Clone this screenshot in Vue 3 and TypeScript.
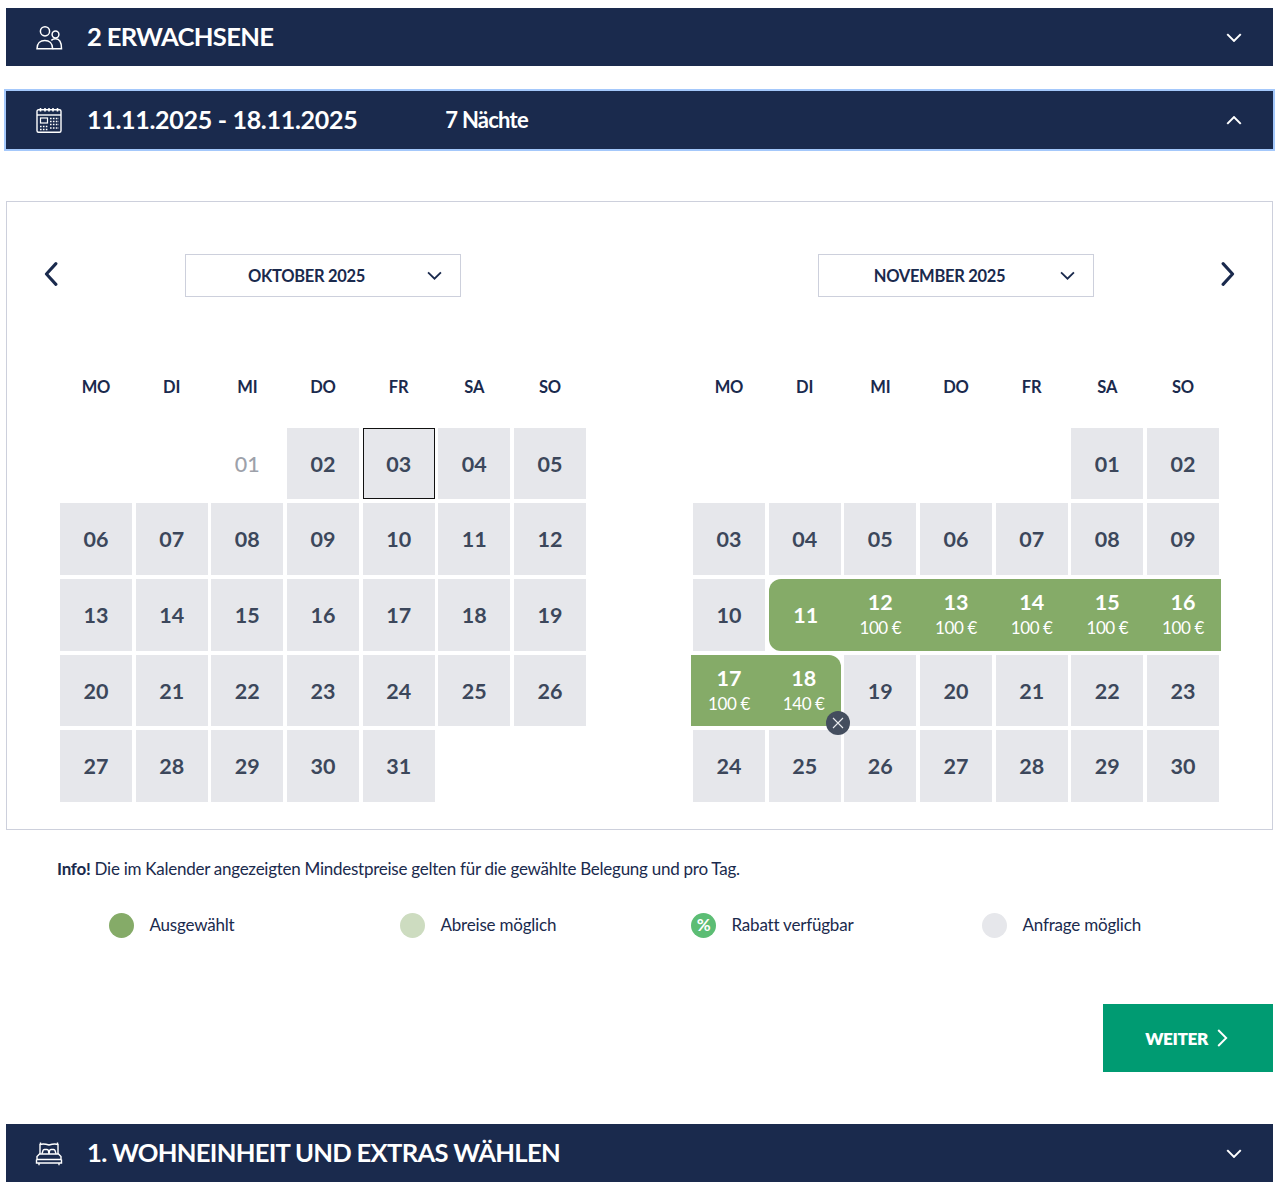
<script setup lang="ts">
interface Day {
  n: string
  price?: string
  muted?: boolean
  today?: boolean
  sel?: 'start' | 'mid' | 'end' | 'wrap'
  clear?: boolean
}
interface Month {
  label: string
  offset: number
  days: Day[]
}

const weekdays = ['MO', 'DI', 'MI', 'DO', 'FR', 'SA', 'SO']

const pad = (n: number) => String(n).padStart(2, '0')

const october: Day[] = Array.from({ length: 31 }, (_, i) => ({
  n: pad(i + 1),
  muted: i === 0,
  today: i === 2,
}))

const prices: Record<number, string> = {
  12: '100 €', 13: '100 €', 14: '100 €', 15: '100 €', 16: '100 €', 17: '100 €', 18: '140 €',
}

const november: Day[] = Array.from({ length: 30 }, (_, i) => {
  const n = i + 1
  const day: Day = { n: pad(n), price: prices[n] }
  if (n === 11) day.sel = 'start'
  else if (n >= 12 && n <= 15) day.sel = 'mid'
  else if (n === 16 || n === 17) day.sel = 'wrap'
  else if (n === 18) { day.sel = 'end'; day.clear = true }
  return day
})

const months: Month[] = [
  { label: 'OKTOBER 2025', offset: 2, days: october },
  { label: 'NOVEMBER 2025', offset: 5, days: november },
]

const legend = [
  { label: 'Ausgewählt', cls: 'dot--sel' },
  { label: 'Abreise möglich', cls: 'dot--dep' },
  { label: 'Rabatt verfügbar', cls: 'dot--disc' },
  { label: 'Anfrage möglich', cls: 'dot--req' },
]
</script>

<template>
  <div class="page">
    <div class="bar">
      <svg class="bar__icon" viewBox="0 0 28 25" fill="none" stroke="currentColor" stroke-width="1.500">
        <circle cx="10" cy="6.300" r="4.600" />
        <circle cx="20.500" cy="9.500" r="3.400" />
        <path d="M2 23.700c0-5.200 3.400-8.200 7.800-8.200s7.800 3 7.800 8.200z" />
        <path d="M16.300 15.300c1.200-1 2.700-1.500 4.200-1.500 3.800 0 6 3.500 6 9.900h-8.900" />
      </svg>
      <span class="bar__title">2 ERWACHSENE</span>
      <svg class="bar__chevron" viewBox="0 0 14 8" fill="none" stroke="currentColor" stroke-width="1.800"><path d="M1 1l6 6 6-6" /></svg>
    </div>

    <div class="bar bar--active">
      <svg class="bar__icon" viewBox="0 0 28 26" fill="none" stroke="currentColor" stroke-width="1.400">
        <rect x="2" y="2.800" width="24" height="22.400" rx="1.500" />
        <path d="M2 8h24" />
        <path d="M5.500 1v3.500M10 1v3.500M14 1v3.500M18 1v3.500M22.500 1v3.500" stroke-width="1.600" />
        <rect x="5.500" y="11" width="7" height="5" stroke-width="1.200" />
        <path d="M15 11.500h9M15 14.500h9M15 17.500h9M15 21h9M5 19.500h8M5 22.500h8" stroke-width="1.700" stroke-dasharray="1.600 1.300" />
      </svg>
      <span class="bar__title bar__title--date">11.11.2025 - 18.11.2025</span>
      <span class="bar__nights">7 Nächte</span>
      <svg class="bar__chevron" viewBox="0 0 14 8" fill="none" stroke="currentColor" stroke-width="1.800"><path d="M1 7l6-6 6 6" /></svg>
    </div>

    <div class="panel">
      <div v-for="(month, m) in months" :key="month.label" class="month">
        <div class="month__head">
          <svg v-if="m === 0" class="nav nav--prev" viewBox="0 0 12 22" fill="none" stroke="currentColor" stroke-width="2.800" stroke-linecap="round" stroke-linejoin="round"><path d="M10.500 1.500L1.800 11l8.700 9.500" /></svg>
          <span v-else></span>
          <div class="select">
            <span class="select__label">{{ month.label }}</span>
            <svg class="select__chevron" viewBox="0 0 14 8" fill="none" stroke="currentColor" stroke-width="1.700"><path d="M1 1l6 6 6-6" /></svg>
          </div>
          <svg v-if="m === 1" class="nav nav--next" viewBox="0 0 12 22" fill="none" stroke="currentColor" stroke-width="2.800" stroke-linecap="round" stroke-linejoin="round"><path d="M1.500 1.500L10.200 11l-8.700 9.500" /></svg>
        </div>

        <div class="weekdays">
          <span v-for="w in weekdays" :key="w">{{ w }}</span>
        </div>

        <div class="days">
          <span v-for="i in month.offset" :key="'e' + i"></span>
          <div
            v-for="day in month.days"
            :key="day.n"
            class="day"
            :class="[
              day.sel ? 'day--' + day.sel : '',
              { 'day--muted': day.muted, 'day--today': day.today, 'day--sel': day.sel },
            ]"
          >
            <span class="day__n">{{ day.n }}</span>
            <span v-if="day.price" class="day__price">{{ day.price }}</span>
            <span v-if="day.clear" class="day__clear">
              <svg viewBox="0 0 12 12" fill="none" stroke="currentColor" stroke-width="1.100"><path d="M1 1l10 10M11 1L1 11" /></svg>
            </span>
          </div>
        </div>
      </div>
    </div>

    <p class="info"><b>Info!</b> Die im Kalender angezeigten Mindestpreise gelten für die gewählte Belegung und pro Tag.</p>

    <div class="legend">
      <div v-for="item in legend" :key="item.label" class="legend__item">
        <span class="dot" :class="item.cls"><template v-if="item.cls === 'dot--disc'">%</template></span>
        <span>{{ item.label }}</span>
      </div>
    </div>

    <div class="actions">
      <button class="next" type="button">
        WEITER
        <svg viewBox="0 0 11 18" fill="none" stroke="currentColor" stroke-width="1.900"><path d="M1.200 1l8 8-8 8" /></svg>
      </button>
    </div>

    <div class="bar bar--last">
      <svg class="bar__icon" viewBox="0 0 28 25" fill="none" stroke="currentColor" stroke-width="1.400">
        <path d="M5 13V3.500c2-.8 5-.8 9 .5 4-1.300 7-1.300 9-.5V13" />
        <path d="M5.500 1.500v2M22.500 1.500v2" />
        <path d="M7 12.800l1-3.300c.2-.7.7-1 1.400-1h2.600c.7 0 1.200.3 1.400 1l.6 3.300l.6-3.300c.2-.7.7-1 1.400-1h2.600c.7 0 1.200.3 1.400 1l1 3.300" />
        <path d="M2 18.500V15.500L4.500 13h19L26 15.500v3z" />
        <path d="M1.500 18.500v3.500h25v-3.500M4 22v2.200M24 22v2.200" />
      </svg>
      <span class="bar__title">1. WOHNEINHEIT UND EXTRAS WÄHLEN</span>
      <svg class="bar__chevron" viewBox="0 0 14 8" fill="none" stroke="currentColor" stroke-width="1.800"><path d="M1 1l6 6 6-6" /></svg>
    </div>
  </div>
</template>

<style>
html, body {
  margin: 0;
  background: #fff;
}
</style>

<style scoped>
.page {
  width: 1267px;
  height: 1188px;
  box-sizing: border-box;
  margin-left: 6px;
  padding-top: 8px;
  font-family: Lato, "Open Sans", sans-serif;
  color: #1a2a4d;
}

.bar {
  height: 58px;
  background: #1a2a4d;
  color: #fff;
  display: flex;
  align-items: center;
  padding: 0 31px 0 29px;
}
.bar--active {
  margin-top: 25px;
  outline: 2px solid #a4c8fb;
}
.bar--last {
  margin-top: 52px;
}
.bar__icon {
  width: 28px;
  height: 25px;
  flex: none;
}
.bar--active .bar__icon {
  height: 26px;
}
.bar__title {
  margin: 0 0 2px 24px;
  font-size: 25.600px;
  font-weight: 700;
  letter-spacing: -0.7px;
}
.bar__title--date {
  font-size: 25px;
  letter-spacing: -0.3px;
}
.bar__nights {
  margin: 0 0 2px 88px;
  font-size: 22px;
  font-weight: 700;
  letter-spacing: -0.75px;
}
.bar__chevron {
  width: 16px;
  height: 9px;
  margin-left: auto;
  flex: none;
}

.panel {
  margin-top: 52px;
  height: 629px;
  box-sizing: border-box;
  border: 1px solid #cdd0dc;
  padding: 52px 53px 0;
  display: flex;
  gap: 107px;
}
.month {
  width: 526px;
}
.month__head {
  height: 43px;
  display: grid;
  grid-template-columns: 1fr 276px 1fr;
  align-items: center;
}
.nav {
  width: 14px;
  height: 24px;
  margin-top: -3px;
}
.nav--prev {
  margin-left: -16px;
}
.nav--next {
  justify-self: end;
  margin-right: -16px;
}
.select {
  height: 43px;
  box-sizing: border-box;
  border: 1px solid #cdd0dc;
  display: flex;
  align-items: center;
  padding-right: 18px;
}
.select__label {
  flex: 1;
  text-align: center;
  font-size: 16.500px;
  font-weight: 700;
  letter-spacing: -0.3px;
}
.select__chevron {
  width: 15px;
  height: 9px;
  flex: none;
}

.weekdays {
  margin-top: 80px;
  display: grid;
  grid-template-columns: repeat(7, 1fr);
  column-gap: 3.670px;
  text-align: center;
  font-size: 16.500px;
  font-weight: 700;
  letter-spacing: -0.1px;
  line-height: 20px;
}
.days {
  margin-top: 30.700px;
  display: grid;
  grid-template-columns: repeat(7, 1fr);
  grid-auto-rows: 71.600px;
  column-gap: 3.670px;
  row-gap: 4.070px;
}
.day {
  position: relative;
  box-sizing: border-box;
  padding-top: 0.600px;
  background: #e6e7eb;
  color: #3c475b;
  display: flex;
  flex-direction: column;
  align-items: center;
  justify-content: center;
  font-size: 21.500px;
  font-weight: 700;
}
.day--muted {
  background: transparent;
  color: #9da1aa;
  font-weight: 500;
}
.day--today {
  outline: 1px solid #111;
  outline-offset: -1px;
}
.day--sel {
  background: #85ab68;
  color: #fff;
  margin-left: -2px;
  margin-right: -2px;
}
.day--start {
  margin-left: 0;
  border-radius: 12px 0 0 12px;
}
.day--end {
  margin-right: 0;
  border-top-right-radius: 12px;
}
.day__n {
  line-height: 26px;
}
.day__price {
  font-size: 17px;
  font-weight: 400;
  line-height: 26.500px;
  letter-spacing: -0.4px;
}
.day__clear {
  position: absolute;
  z-index: 2;
  right: -9px;
  bottom: -9px;
  width: 24px;
  height: 24px;
  border-radius: 50%;
  background: #434d5e;
  color: #e9ebee;
  display: flex;
  align-items: center;
  justify-content: center;
}
.day__clear svg {
  width: 12px;
  height: 12px;
}

.info {
  margin: 28px 0 0 51px;
  font-size: 17px;
  line-height: 22px;
  letter-spacing: -0.26px;
}
.info b {
  font-weight: 700;
}
.legend {
  margin: 32px 0 0 103px;
  display: grid;
  grid-template-columns: repeat(4, 291px);
}
.legend__item {
  display: flex;
  align-items: center;
  gap: 15.500px;
  font-size: 17px;
  line-height: 26px;
  letter-spacing: -0.2px;
}
.dot {
  width: 25px;
  height: 25px;
  border-radius: 50%;
  display: flex;
  align-items: center;
  justify-content: center;
  color: #fff;
  font-size: 17px;
  font-weight: 700;
}
.dot--sel { background: #85ab68; }
.dot--dep { background: #cddcc0; }
.dot--disc { background: #5cbd74; }
.dot--req { background: #e6e7eb; }

.actions {
  margin-top: 66px;
  display: flex;
  justify-content: flex-end;
}
.next {
  width: 170px;
  height: 68px;
  border: 0;
  background: #009b72;
  color: #fff;
  font-family: inherit;
  font-size: 17.200px;
  font-weight: 800;
  letter-spacing: -0.4px;
  display: flex;
  align-items: center;
  justify-content: center;
  gap: 9px;
  padding: 0 3px 0 0;
}
.next svg {
  width: 11px;
  height: 18px;
}
</style>
